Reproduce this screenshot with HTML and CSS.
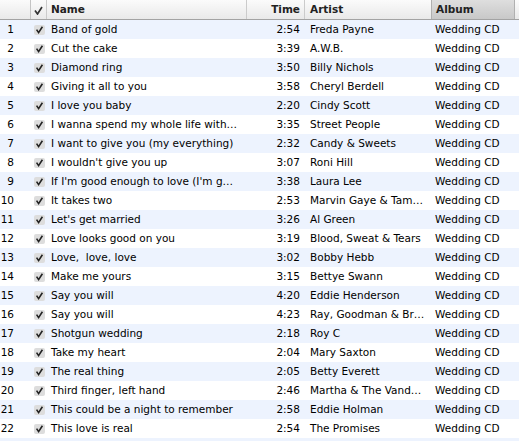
FILE: index.html
```html
<!DOCTYPE html>
<html>
<head>
<meta charset="utf-8">
<link rel="stylesheet" href="styles.css">
</head>
<body>
<div class="table">
  <div class="row head">
    <div class="c num"></div>
    <div class="c chk"><svg class="hcheck" width="9" height="9" viewBox="0 0 9 9"><path d="M1 4.5 L3.5 8 L8 1" fill="none" stroke="#333" stroke-width="1.7"/></svg></div>
    <div class="c name">Name</div>
    <div class="c time">Time</div>
    <div class="c artist">Artist</div>
    <div class="c album sel">Album</div>
    <div class="c pad"></div>
  </div>
  <div id="rows"></div>
</div>
<script src="script.js"></script>
</body>
</html>
```

FILE: script.js
```js
const data = [
["Band of gold","2:54","Freda Payne"],
["Cut the cake","3:39","A.W.B."],
["Diamond ring","3:50","Billy Nichols"],
["Giving it all to you","3:58","Cheryl Berdell"],
["I love you baby","2:20","Cindy Scott"],
["I wanna spend my whole life with…","3:35","Street People"],
["I want to give you (my everything)","2:32","Candy & Sweets"],
["I wouldn't give you up","3:07","Roni Hill"],
["If I'm good enough to love (I'm g…","3:38","Laura Lee"],
["It takes two","2:53","Marvin Gaye & Tam…"],
["Let's get married","3:26","Al Green"],
["Love looks good on you","3:19","Blood, Sweat & Tears"],
["Love,\u00a0 love, love","3:02","Bobby Hebb"],
["Make me yours","3:15","Bettye Swann"],
["Say you will","4:20","Eddie Henderson"],
["Say you will","4:23","Ray, Goodman & Br…"],
["Shotgun wedding","2:18","Roy C"],
["Take my heart","2:04","Mary Saxton"],
["The real thing","2:05","Betty Everett"],
["Third finger, left hand","2:46","Martha & The Vand…"],
["This could be a night to remember","2:58","Eddie Holman"],
["This love is real","2:54","The Promises"]
];
const SVGNS = 'http://www.w3.org/2000/svg';
const rows = document.getElementById('rows');
function cell(cls, text) {
  const d = document.createElement('div');
  d.className = 'c ' + cls;
  if (text !== undefined) d.textContent = text;
  return d;
}
function checkBox() {
  const box = document.createElement('span');
  box.className = 'box';
  const svg = document.createElementNS(SVGNS, 'svg');
  svg.setAttribute('width', '11');
  svg.setAttribute('height', '10');
  svg.setAttribute('viewBox', '0 0 11 10');
  const p = document.createElementNS(SVGNS, 'path');
  p.setAttribute('d', 'M2.6 4.6 L4.6 7.6 L8.4 1.8');
  p.setAttribute('fill', 'none');
  p.setAttribute('stroke', '#222');
  p.setAttribute('stroke-width', '1.6');
  svg.appendChild(p);
  box.appendChild(svg);
  return box;
}
data.forEach((r, i) => {
  const row = document.createElement('div');
  row.className = 'row ' + (i % 2 === 0 ? 'odd' : 'even');
  row.appendChild(cell('num', String(i + 1)));
  const ck = cell('chk');
  ck.appendChild(checkBox());
  row.appendChild(ck);
  row.appendChild(cell('name', r[0]));
  row.appendChild(cell('time', r[1]));
  row.appendChild(cell('artist', r[2]));
  row.appendChild(cell('album', 'Wedding CD'));
  row.appendChild(cell('pad'));
  rows.appendChild(row);
});
const extra = document.createElement('div');
extra.className = 'row odd';
rows.appendChild(extra);
```

FILE: styles.css
```css
html, body {
  margin: 0;
  padding: 0;
  background: #ffffff;
  overflow: hidden;
}
body {
  font-family: "DejaVu Sans", "Liberation Sans", sans-serif;
  font-size: 10.5px;
  color: #000;
}
.table {
  width: 519px;
}
.row {
  display: grid;
  grid-template-columns: 31px 16px 200px 58px 126px 84px 4px;
  height: 19px;
  line-height: 19px;
}
.row.odd { background: #edf3fe; }
.row.even { background: #ffffff; }
.c {
  white-space: nowrap;
  overflow: hidden;
}
.num {
  text-align: right;
  padding-right: 17px;
}
.chk {
  position: relative;
}
.box {
  position: absolute;
  left: 3px;
  top: 5px;
  width: 11px;
  height: 10px;
  background: #dddddd;
  border-radius: 2px;
}
.box svg { display: block; }
.name { padding-left: 4px; }
.time { text-align: right; padding-right: 5px; }
.artist { padding-left: 5px; }
.album { padding-left: 4px; }

.row.head {
  height: 19px;
  line-height: 19px;
  background: linear-gradient(#fbfbfb, #e9e9e9);
  border-bottom: 1px solid #a3a3a3;
  font-weight: bold;
  color: #222;
}
.head .c {
  border-right: 1px solid #cbcbcb;
  box-sizing: border-box;
}
.head .pad { border-right: none; }
.head .num { border-right: 1px solid #c4c4c4; }
.head .chk {
  position: relative;
}
.hcheck {
  position: absolute;
  left: 3px;
  top: 6px;
}
.head .name { padding-left: 4px; }
.head .time { padding-right: 4px; }
.head .sel {
  background: linear-gradient(#dedede, #c8c8c8);
  border-left: 1px solid #b0b0b0;
  border-right: 1px solid #b0b0b0;
  padding-left: 4px;
}
.head .artist { border-right: none; }
```
